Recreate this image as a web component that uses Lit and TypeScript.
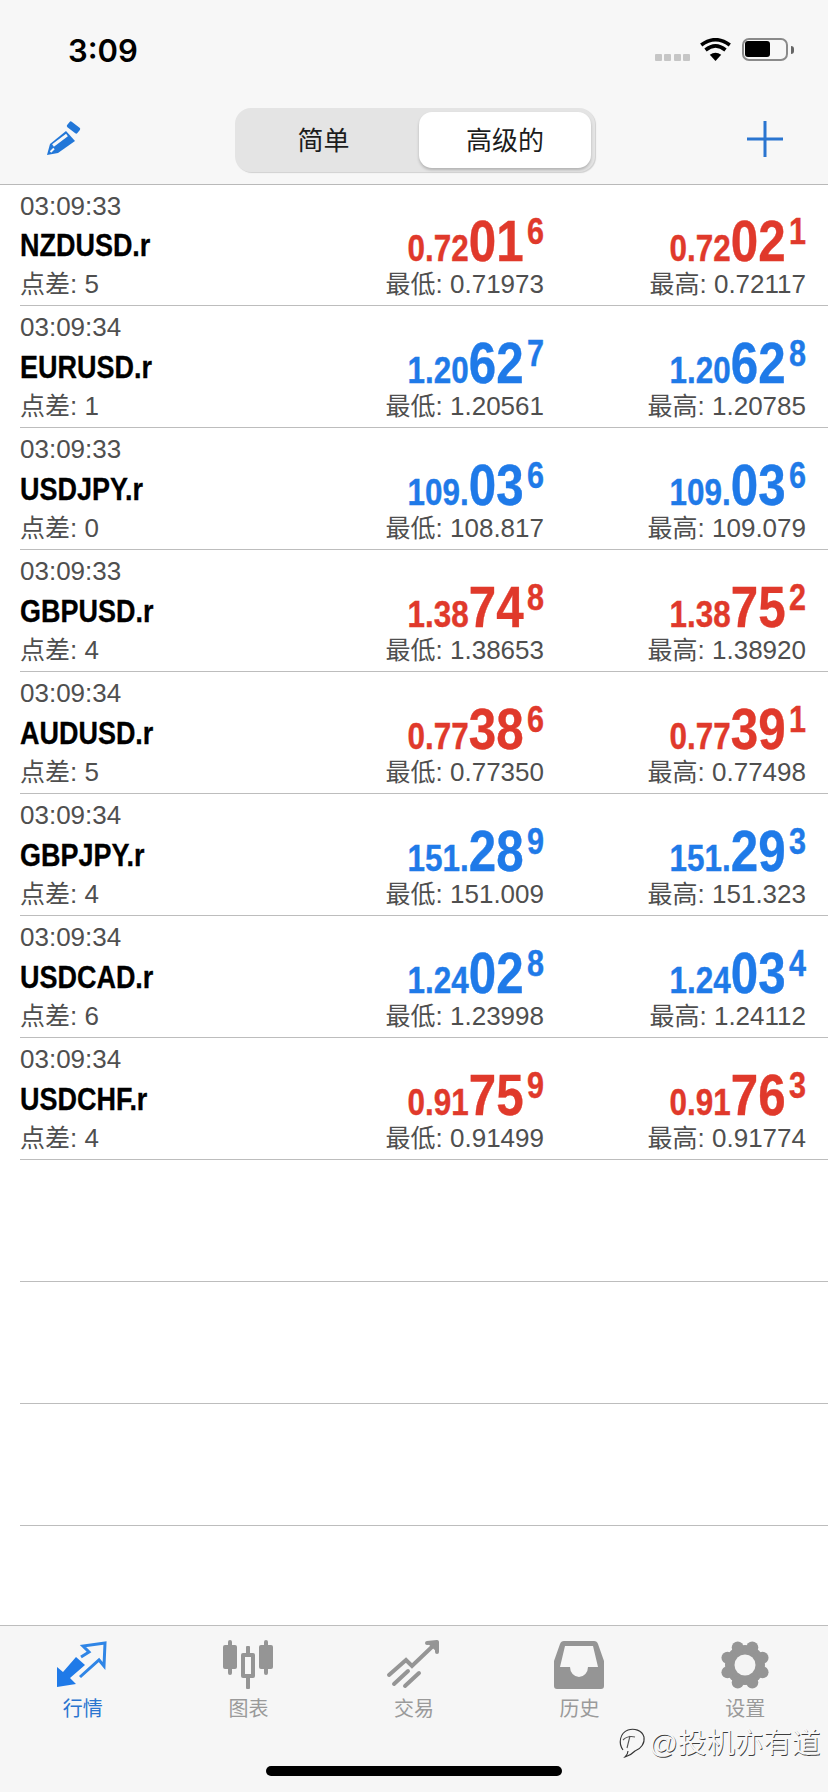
import { LitElement, css, html, svg } from "lit";
import { customElement } from "lit/decorators.js";

type Price = [string, string, string];

interface Quote {
  symbol: string;
  time: string;
  spread: number;
  bid: Price;
  ask: Price;
  low: string;
  high: string;
  up: boolean;
}

const QUOTES: Quote[] = [
  { symbol: "NZDUSD.r", time: "03:09:33", spread: 5, bid: ["0.72", "01", "6"], ask: ["0.72", "02", "1"], low: "0.71973", high: "0.72117", up: false },
  { symbol: "EURUSD.r", time: "03:09:34", spread: 1, bid: ["1.20", "62", "7"], ask: ["1.20", "62", "8"], low: "1.20561", high: "1.20785", up: true },
  { symbol: "USDJPY.r", time: "03:09:33", spread: 0, bid: ["109.", "03", "6"], ask: ["109.", "03", "6"], low: "108.817", high: "109.079", up: true },
  { symbol: "GBPUSD.r", time: "03:09:33", spread: 4, bid: ["1.38", "74", "8"], ask: ["1.38", "75", "2"], low: "1.38653", high: "1.38920", up: false },
  { symbol: "AUDUSD.r", time: "03:09:34", spread: 5, bid: ["0.77", "38", "6"], ask: ["0.77", "39", "1"], low: "0.77350", high: "0.77498", up: false },
  { symbol: "GBPJPY.r", time: "03:09:34", spread: 4, bid: ["151.", "28", "9"], ask: ["151.", "29", "3"], low: "151.009", high: "151.323", up: true },
  { symbol: "USDCAD.r", time: "03:09:34", spread: 6, bid: ["1.24", "02", "8"], ask: ["1.24", "03", "4"], low: "1.23998", high: "1.24112", up: true },
  { symbol: "USDCHF.r", time: "03:09:34", spread: 4, bid: ["0.91", "75", "9"], ask: ["0.91", "76", "3"], low: "0.91499", high: "0.91774", up: false },
];

const gearTeeth = Array.from({ length: 8 }, (_, i) => {
  const a = (i * Math.PI) / 4 + Math.PI / 8;
  return svg`<circle cx=${25 + 19 * Math.cos(a)} cy=${25 + 19 * Math.sin(a)} r="6"></circle>`;
});

const TABS = [
  {
    label: "行情",
    active: true,
    icon: html`<svg width="100" height="75" viewBox="-7 0 100 75">
      <path fill="#1f7ae8" d="M17 61V41l6 5 13-15 9 8-15 13 6 6z"></path>
      <path fill="none" stroke="#2f85e6" stroke-width="3" d="M41 31l8-5-6-6 22-3-1 23-5-6-19 17"></path>
    </svg>`,
  },
  {
    label: "图表",
    active: false,
    icon: html`<svg width="100" height="75" viewBox="-2 0 100 75" fill="#959595">
      <rect x="23" y="19" width="14" height="24" rx="2"></rect>
      <rect x="28" y="14" width="4" height="35" rx="2"></rect>
      <rect x="59" y="19" width="14" height="24" rx="2"></rect>
      <rect x="64" y="14" width="4" height="35" rx="2"></rect>
      <rect x="46" y="20" width="4" height="43" rx="1"></rect>
      <rect x="41" y="27" width="14" height="25" rx="2"></rect>
      <rect x="45" y="31" width="6" height="17" fill="#f6f6f6"></rect>
    </svg>`,
  },
  {
    label: "交易",
    active: false,
    icon: html`<svg width="100" height="75" viewBox="-11 0 100 75" fill="none" stroke="#959595" stroke-width="4" stroke-linecap="round">
      <path d="M14 49l17-15 6 6 23-22"></path>
      <path fill="#959595" d="M52 17l10-1v10" stroke-linejoin="round"></path>
      <path d="M19 58l14-13M30 60l14-13"></path>
    </svg>`,
  },
  {
    label: "历史",
    active: false,
    icon: html`<svg width="100" height="75" viewBox="1 0 100 75">
      <g transform="translate(25 15)">
        <path fill="#959595" fill-rule="evenodd"
          d="M10 0H40q3 0 4 3L50 20V45q0 3-3 3H3q-3 0-3-3V20L6 3q1-3 4-3ZM11 5 6 26H16A9 10 0 0 0 34 26H44L39 5Z"></path>
      </g>
    </svg>`,
  },
  {
    label: "设置",
    active: false,
    icon: html`<svg width="100" height="75" viewBox="0 0 100 75" fill="#959595">
      <g transform="translate(25 14)">
        <circle cx="25" cy="25" r="20"></circle>
        ${gearTeeth}
        <circle cx="25" cy="25" r="10.5" fill="#f4f4f4"></circle>
      </g>
    </svg>`,
  },
];

@customElement("app-root")
export class AppRoot extends LitElement {
  static styles = css`
    :host {
      display: flex;
      flex-direction: column;
      position: relative;
      width: 828px;
      height: 1792px;
      background: #fff;
      overflow: hidden;
      font-family: "Liberation Sans", "Noto Sans CJK SC", sans-serif;
      color: #4f4f4f;
    }
    svg {
      display: block;
    }
    .top {
      background: #f7f7f7;
      border-bottom: 1px solid #b9b9b9;
    }
    .status {
      height: 108px;
      display: flex;
      justify-content: space-between;
      padding: 33px 34px 0 68px;
      box-sizing: border-box;
    }
    .clock {
      font: 600 31px/36px Inter, sans-serif;
      color: #000;
    }
    .indicators {
      display: flex;
      align-items: flex-start;
      padding-top: 5px;
    }
    .dots {
      display: flex;
      gap: 2.5px;
      margin: 16px 10px 0 0;
    }
    .dots i {
      width: 7px;
      height: 7px;
      border-radius: 1px;
      background: #c6c6c6;
    }
    .battery {
      width: 46px;
      height: 23px;
      box-sizing: border-box;
      border: 2.5px solid #8a8a8a;
      border-radius: 7px;
      padding: 1px;
      margin-left: 11px;
    }
    .battery i {
      display: block;
      width: 25px;
      height: 16px;
      border-radius: 3px;
      background: #000;
    }
    .tip {
      width: 3px;
      height: 8px;
      margin: 8px 0 0 3px;
      border-radius: 0 3px 3px 0;
      background: #666;
    }
    .nav {
      height: 76px;
      display: grid;
      grid-template-columns: 1fr 360px 1fr;
      align-items: start;
      padding: 0 45px 0 47px;
    }
    .nav .plus {
      justify-self: end;
      margin-top: 13px;
    }
    .nav .pen {
      margin-top: 12px;
    }
    .segment {
      height: 64px;
      box-sizing: border-box;
      display: grid;
      grid-template-columns: 1fr 172px;
      padding: 4px;
      border-radius: 16px;
      background: #e4e4e4;
      box-shadow: 1px 1px 1px #d0d0d0;
      font-size: 26px;
      color: #1c1c1c;
    }
    .segment span {
      display: flex;
      align-items: center;
      justify-content: center;
      padding-bottom: 3px;
    }
    .segment .off {
      padding-right: 11px;
    }
    .segment .on {
      background: #fff;
      border-radius: 13px;
      box-shadow: 0 2px 3px rgba(0, 0, 0, 0.22);
    }
    .list {
      flex: 1;
    }
    .row {
      height: 122px;
      box-sizing: border-box;
      margin-left: 20px;
      padding-right: 22px;
      border-bottom: 1px solid #bdbdbd;
      display: grid;
      grid-template-columns: 1fr 262px 262px;
      grid-template-rows: 43px 38px 38px;
      font-size: 26px;
      white-space: nowrap;
    }
    .row:first-child {
      height: 121px;
      grid-template-rows: 42px 38px 38px;
    }
    .row > div {
      line-height: 38px;
    }
    .row > .time {
      grid-column: 1 / -1;
      line-height: 43px;
    }
    .symbol {
      font-weight: 700;
      font-size: 31px;
      color: #000;
      transform: scaleX(0.87);
      transform-origin: left center;
      -webkit-text-stroke: 0.3px #000;
    }
    .row > .price {
      text-align: right;
      font-weight: 700;
      font-size: 37px;
      line-height: 26px;
      padding-top: 1px;
      transform: scaleX(0.85);
      transform-origin: right center;
      -webkit-text-stroke: 0.4px currentColor;
    }
    .price b {
      font-size: 58px;
      line-height: 26px;
    }
    .price sup {
      font-size: 36px;
      line-height: 0;
      vertical-align: 17px;
      margin-left: 4px;
    }
    .price.red {
      color: #e0392b;
    }
    .price.blue {
      color: #1f7ae8;
    }
    .stat {
      text-align: right;
    }
    .cjk {
      font-size: 25px;
    }
    .tabs {
      height: 167px;
      box-sizing: border-box;
      border-top: 1px solid #bdbdbd;
      background: #f6f6f6;
      display: flex;
      flex-direction: column;
    }
    .tab-row {
      display: grid;
      grid-template-columns: repeat(5, 1fr);
    }
    .tab {
      display: flex;
      flex-direction: column;
      align-items: center;
      color: #9a9a9a;
      font-size: 20px;
      line-height: 24px;
    }
    .tab.active {
      color: #2a75d0;
    }
    .tab span {
      margin-top: -4px;
    }
    .home {
      width: 296px;
      height: 10px;
      margin: 45px auto 0;
      border-radius: 5px;
      background: #000;
    }
    .mark {
      position: absolute;
      left: 617px;
      top: 1724px;
      display: flex;
      align-items: center;
      gap: 2px;
      font-size: 28.5px;
      line-height: 38px;
      color: #f7f7f7;
      text-shadow: 0.7px 0.7px 0.6px rgba(0, 0, 0, 0.75), -0.5px -0.5px 0.5px rgba(255, 255, 255, 0.9);
    }
  `;

  private renderPrice(p: Price, up: boolean) {
    return html`<div class="price ${up ? "blue" : "red"}">${p[0]}<b>${p[1]}</b><sup>${p[2]}</sup></div>`;
  }

  private renderRow(q: Quote) {
    return html`<div class="row">
      <div class="time">${q.time}</div>
      <div class="symbol">${q.symbol}</div>
      ${this.renderPrice(q.bid, q.up)} ${this.renderPrice(q.ask, q.up)}
      <div><span class="cjk">点差</span>: ${q.spread}</div>
      <div class="stat"><span class="cjk">最低</span>: ${q.low}</div>
      <div class="stat"><span class="cjk">最高</span>: ${q.high}</div>
    </div>`;
  }

  protected render(): unknown {
    return html`
      <div class="top">
        <div class="status">
          <div class="clock">3:09</div>
          <div class="indicators">
            <div class="dots"><i></i><i></i><i></i><i></i></div>
            <svg width="31" height="23" viewBox="0 0 31 23">
              <path d="M15.5 23 9.8 16.8Q15.5 12.6 21.2 16.8Z"></path>
              <g fill="none" stroke="#000" stroke-width="3.6">
                <path d="M5.5 12Q15.5 3.8 25.5 12"></path>
                <path d="M1.2 7Q15.5 -3.6 29.8 7"></path>
              </g>
            </svg>
            <div class="battery"><i></i></div>
            <div class="tip"></div>
          </div>
        </div>
        <div class="nav">
          <svg class="pen" width="36" height="36" viewBox="27 20 36 36" fill="#2277d8">
            <path d="M27 55 30 44 46 31 55 41 38 53Z"></path>
            <path d="M33 45.5 47 35" stroke="#f7f7f7" stroke-width="3"></path>
            <path d="M30.5 52 34 48.5" stroke="#f7f7f7" stroke-width="2"></path>
            <rect x="47" y="24" width="13" height="7" rx="1.5" transform="rotate(38 53.5 27.5)"></rect>
          </svg>
          <div class="segment">
            <span class="off">简单</span>
            <span class="on">高级的</span>
          </div>
          <svg class="plus" width="36" height="36" viewBox="0 0 36 36" stroke="#2a75d0" stroke-width="3">
            <path d="M18 0V36M0 18H36"></path>
          </svg>
        </div>
      </div>
      <div class="list">
        ${QUOTES.map((q) => this.renderRow(q))}
        <div class="row"></div>
        <div class="row"></div>
        <div class="row"></div>
      </div>
      <div class="tabs">
        <div class="tab-row">
          ${TABS.map(
            (t) => html`<div class="tab ${t.active ? "active" : ""}">
              ${t.icon}
              <span>${t.label}</span>
            </div>`
          )}
        </div>
        <div class="home"></div>
      </div>
      <div class="mark">
        <svg width="30" height="34" viewBox="0 0 30 34" fill="none" stroke="#333" stroke-width="1.1">
          <path d="M6 24C1 17 3 7 11 4c6-2 14 0 16 7 1 6-3 12-9 14-3 3-6 5-10 6 2-2 3-4 3-6"></path>
          <path d="M6 14c3-3 8-4 12-3M13 10l-3 12" stroke="#555"></path>
        </svg>
        <span>@投机亦有道</span>
      </div>
    `;
  }
}
